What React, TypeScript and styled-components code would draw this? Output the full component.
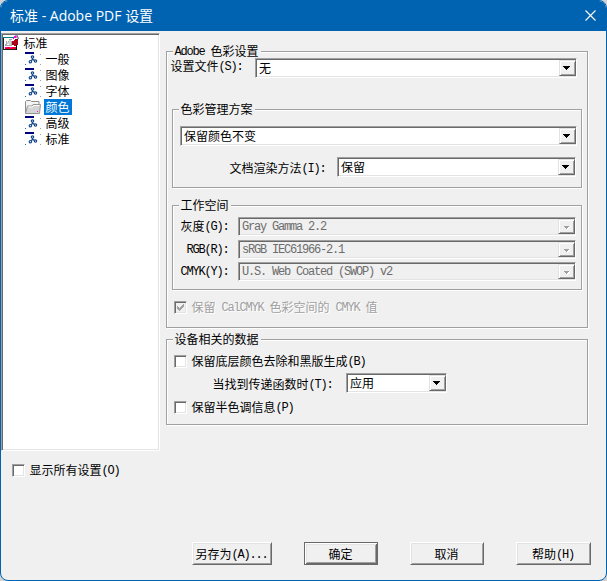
import React from 'react';
import styled, { createGlobalStyle, css } from 'styled-components';

const GlobalStyle = createGlobalStyle`
  * { box-sizing: border-box; }
  body {
    margin: 0;
    background: #cfd3d8;
    color: #000;
    font: 12px/12px "Noto Sans CJK SC", sans-serif;
  }
`;

const sunken = css`
  border: 1px solid;
  border-color: #a0a0a0 #fff #fff #a0a0a0;
  box-shadow: inset 1px 1px #696969, inset -1px -1px #e3e3e3;
`;

const Window = styled.div`
  display: flex;
  flex-direction: column;
  width: 607px;
  height: 581px;
  border: 1px solid #0063b1;
  border-radius: 8px;
  background: #f0f0f0;
  overflow: hidden;
`;

const TitleBar = styled.header`
  display: flex;
  align-items: center;
  justify-content: space-between;
  flex: none;
  height: 30px;
  padding: 0 10px 1px 9px;
  background: #0063b1;
  color: #fff;
  font-size: 14px;
`;

const TitleText = styled.div`
  white-space: pre;
`;

const TitleLatin = styled.span`
  font-family: "Open Sans", sans-serif;
  font-size: 14px;
`;

const Main = styled.div`
  display: flex;
  flex: none;
  height: 511px;
`;

const Side = styled.div`
  display: flex;
  flex-direction: column;
  width: 159px;
  padding-top: 2px;
`;

const Tree = styled.div`
  ${sunken}
  height: 418px;
  flex: none;
  padding: 1px 1px 0 1px;
  background: #fff;
`;

const TreeRow = styled.div<{ $child?: boolean }>`
  display: flex;
  height: 16px;
  padding-left: ${(p) => (p.$child ? 22 : 0)}px;
`;

const TreeIcon = styled.svg`
  flex: none;
  width: 16px;
  height: 16px;
`;

const TreeLabel = styled.span<{ $selected?: boolean }>`
  margin-left: 3px;
  padding: 0 2.5px 0 1.5px;
  line-height: 16px;
  color: ${(p) => (p.$selected ? '#fff' : '#000')};
  background: ${(p) => (p.$selected ? '#0078d7' : 'transparent')};
`;

const Settings = styled.div`
  width: 422px;
  margin-left: 6px;
  padding-top: 20px;
`;

const Group = styled.section<{ $height: number; $top?: number; $nested?: boolean }>`
  display: flow-root;
  height: ${(p) => p.$height}px;
  width: ${(p) => (p.$nested ? '410px' : 'auto')};
  margin: ${(p) => p.$top ?? 0}px 0 0 ${(p) => (p.$nested ? 5 : 0)}px;
  border: 1px solid #a0a0a0;
  box-shadow: inset 1px 1px #fff, 1px 1px #fff;
`;

const Legend = styled.h2`
  width: max-content;
  height: 12px;
  margin: -7px 0 0 6px;
  padding: 0 2.5px 0 1.5px;
  background: #f0f0f0;
  font: inherit;
  white-space: pre;
`;

const Row = styled.div<{ $top: number; $left: number; $gap?: number }>`
  display: flex;
  align-items: flex-start;
  gap: ${(p) => p.$gap ?? 0}px;
  margin: ${(p) => p.$top}px 0 0 ${(p) => p.$left}px;
`;

const Label = styled.label<{ $width: number; $drop?: number }>`
  flex: none;
  width: ${(p) => p.$width}px;
  padding-top: ${(p) => p.$drop ?? 3}px;
  padding-right: 0.5px;
  display: flex;
  justify-content: flex-end;
  white-space: pre;
`;

const ComboBox = styled.div<{ $width: number; $disabled?: boolean }>`
  ${sunken}
  display: flex;
  flex: none;
  width: ${(p) => p.$width}px;
  height: ${(p) => (p.$disabled ? 19 : 20)}px;
  padding: 1px 0 1px 3px;
  background: ${(p) => (p.$disabled ? '#f0f0f0' : '#fff')};
  color: ${(p) => (p.$disabled ? '#6d6d6d' : '#000')};
`;

const ComboValue = styled.span<{ $disabled?: boolean }>`
  flex: 1;
  line-height: ${(p) => (p.$disabled ? 14 : 16)}px;
  white-space: pre;
`;

const raised = css`
  border: 1px solid;
  border-color: #e3e3e3 #696969 #696969 #e3e3e3;
  box-shadow: inset 1px 1px #fff, inset -1px -1px #a0a0a0;
  background: #f0f0f0;
`;

const DropButton = styled.span`
  ${raised}
  width: 17px;
  height: 100%;
`;

const ArrowSvg = styled.svg`
  display: block;
  width: 15px;
  height: 13px;
`;

const CheckRow = styled.label<{ $top: number; $left: number; $disabled?: boolean }>`
  display: flex;
  gap: 4.5px;
  height: 13px;
  margin: ${(p) => p.$top}px 0 0 ${(p) => p.$left}px;
  white-space: pre;
  ${(p) => p.$disabled && css`
    color: #a0a0a0;
    text-shadow: 1px 1px #fff;
  `}
`;

const CheckBox = styled.span<{ $disabled?: boolean }>`
  ${sunken}
  flex: none;
  width: 13px;
  height: 13px;
  background: ${(p) => (p.$disabled ? '#f0f0f0' : '#fff')};
`;

const CheckMark = styled.svg`
  display: block;
  width: 11px;
  height: 11px;
`;

const Footer = styled.footer`
  display: flex;
  gap: 32px;
  padding-left: 191px;
`;

const PushButton = styled.button<{ $width: number; $primary?: boolean }>`
  width: ${(p) => p.$width}px;
  height: 23px;
  padding: 0 1px 1px 0;
  border: 1px solid;
  border-color: #fff #696969 #696969 #fff;
  box-shadow: inset 1px 1px #e3e3e3, inset -1px -1px #a0a0a0;
  background: #f0f0f0;
  color: #000;
  font: inherit;
  line-height: 19px;
  white-space: pre;
  ${(p) => p.$primary && css`
    border-color: #696969;
    box-shadow: inset 1px 1px #fff, inset -1px -1px #696969, inset 2px 2px #e3e3e3, inset -2px -2px #a0a0a0;
  `}
`;

const Narrow = styled.span`
  font-family: "Liberation Mono", monospace;
  font-size: 12px;
  line-height: 1px;
  letter-spacing: -1.2px;
  vertical-align: 1px;
`;

/* Half-width characters take 6px, full-width characters 12px. */
function Mixed({ text }: { text: string }) {
  return (
    <span>
      {text.split(/([\x20-\x7e]+)/).filter(Boolean).map((run, i) =>
        run.charCodeAt(0) < 0x7f ? <Narrow key={i}>{run}</Narrow> : run,
      )}
    </span>
  );
}

function Combo({ value, width, disabled }: { value: string; width: number; disabled?: boolean }) {
  return (
    <ComboBox $width={width} $disabled={disabled}>
      <ComboValue $disabled={disabled}><Mixed text={value} /></ComboValue>
      <DropButton>
        <ArrowSvg viewBox="0 0 15 13" shapeRendering="crispEdges">
          {disabled ? (
            <>
              <path d="M6 7h5v1h-1v1h-1v1h-1v-1h-1v-1h-1z" fill="#fff" />
              <path d="M5 6h5v1h-1v1h-1v1h-1v-1h-1v-1h-1z" fill="#a0a0a0" />
            </>
          ) : (
            <path d="M3 5h7v1h-1v1h-1v1h-1v1h-1v-1h-1v-1h-1v-1h-1z" fill="#000" />
          )}
        </ArrowSvg>
      </DropButton>
    </ComboBox>
  );
}

function Check({ text, top, left, disabled }: { text: string; top: number; left: number; disabled?: boolean }) {
  return (
    <CheckRow $top={top} $left={left} $disabled={disabled}>
      <CheckBox $disabled={disabled}>
        {disabled && (
          <CheckMark viewBox="0 0 11 11" shapeRendering="crispEdges">
            <path d="M2 4h1v1h1v1h1v-1h1v-1h1v-1h1v-1h1v3h-1v1h-1v1h-1v1h-1v1h-1v-1h-1v-1h-1z" fill="#a0a0a0" />
          </CheckMark>
        )}
      </CheckBox>
      <Mixed text={text} />
    </CheckRow>
  );
}

const RootIcon = () => (
  <TreeIcon viewBox="0 0 16 16" shapeRendering="crispEdges">
    <path d="M1 3h12v9H1z" fill="#fff" />
    <path d="M0 2h11v1H0z" fill="#008080" />
    <path d="M0 3h1v12H0zM0 14h14v1H0z" fill="#202020" />
    <path d="M13 10h1v5h-1z" fill="#000" />
    <path d="M9 6h2V5h4v5h-2v1h-2v-1H9z" fill="#b00018" />
    <path d="M12 4h3v1h-3zM10 8h1v2h-1z" fill="#701020" />
    <path d="M2 12h11v2H2z" fill="#f00028" />
    <path d="M2 12h2v1H2zM7 12h2v1H7zM11 1h2v2h-2zM14 1h1v1h-1zM10 3h1v1h-1z" fill="#ff00e0" />
    <path d="M12 0h3v1h-3zM13 1h1v2h-1zM14 2h2v2h-2z" fill="#a99aae" />
    <path d="M3 6h1v3H3zM6 4h3v1H6zM2 9h2v2H2zM4 10h5v1H4zM5 6h1v1H5zM8 6h1v4H8z" fill="#a8a8a8" />
    <path d="M6 5h2v5H6zM4 7h2v2H4z" fill="#d2d2d2" />
  </TreeIcon>
);

const PageIcon = () => (
  <TreeIcon viewBox="0 0 16 16">
    <path d="M0 1h9v2H0z" fill="#000080" />
    <path d="M0 13h1v1H0z" fill="#008080" />
    <path d="M15 3h1v1h-1zM15 13h1v1h-1z" fill="#a0a0a0" />
    <g fill="none" stroke="#174a8c" strokeWidth="1.2">
      <circle cx="7.5" cy="6" r="1.2" />
      <circle cx="5.4" cy="10.7" r="1.2" />
      <circle cx="10.5" cy="10" r="1.2" />
      <path d="M7.5 7v1.6L5.9 9.7M7.6 8.4l2 1" />
    </g>
  </TreeIcon>
);

const FolderIcon = () => (
  <TreeIcon viewBox="0 0 16 16">
    <path d="M.5 14V2.5l1-1h4l1 1h7.5v4" fill="#f4f4f4" stroke="#8c8c8c" />
    <path d="M.5 14.5l2-7.5h4.5l1-1.5h7.5l-1 9z" fill="#d4d4d4" stroke="#969696" />
    <path d="M3.2 8h4.3l1-1.5h6" fill="none" stroke="#fff" />
    <path d="M12 12h1v1h-1z" fill="#ff00ff" />
  </TreeIcon>
);

const pages = ['一般', '图像', '字体', '颜色', '高级', '标准'];

export default function App() {
  return (
    <>
      <GlobalStyle />
      <Window>
        <TitleBar>
          <TitleText>标准<TitleLatin> - Adobe PDF </TitleLatin>设置</TitleText>
          <svg width="11" height="11" viewBox="0 0 11 11">
            <path d="M.5.5l10 10M10.5.5l-10 10" stroke="#fff" fill="none" strokeWidth="1.1" />
          </svg>
        </TitleBar>
        <Main>
          <Side>
            <Tree>
              <TreeRow><RootIcon /><TreeLabel>标准</TreeLabel></TreeRow>
              {pages.map((name) => (
                <TreeRow key={name} $child>
                  {name === '颜色' ? <FolderIcon /> : <PageIcon />}
                  <TreeLabel $selected={name === '颜色'}>{name}</TreeLabel>
                </TreeRow>
              ))}
            </Tree>
            <Check text="显示所有设置(O)" top={13} left={11} />
          </Side>
          <Settings>
            <Group $height={277}>
              <Legend><Mixed text="Adobe 色彩设置" /></Legend>
              <Row $top={1} $left={4} $gap={12}>
                <Label $width={72} $drop={2}><Mixed text="设置文件(S):" /></Label>
                <Combo value="无" width={322} />
              </Row>
              <Group $height={79} $top={31} $nested>
                <Legend>色彩管理方案</Legend>
                <Row $top={11} $left={7}>
                  <Combo value="保留颜色不变" width={397} />
                </Row>
                <Row $top={11} $left={57} $gap={11}>
                  <Label $width={96} $drop={5}><Mixed text="文档渲染方法(I):" /></Label>
                  <Combo value="保留" width={239} />
                </Row>
              </Group>
              <Group $height={85} $top={17} $nested>
                <Legend>工作空间</Legend>
                <Row $top={6} $left={8} $gap={9}>
                  <Label $width={48}><Mixed text="灰度(G):" /></Label>
                  <Combo value="Gray Gamma 2.2" width={338} disabled />
                </Row>
                <Row $top={4} $left={8} $gap={9}>
                  <Label $width={48}><Mixed text="RGB(R):" /></Label>
                  <Combo value="sRGB IEC61966-2.1" width={338} disabled />
                </Row>
                <Row $top={3} $left={8} $gap={9}>
                  <Label $width={48}><Mixed text="CMYK(Y):" /></Label>
                  <Combo value="U.S. Web Coated (SWOP) v2" width={338} disabled />
                </Row>
              </Group>
              <Check text="保留 CalCMYK 色彩空间的 CMYK 值" top={11} left={7} disabled />
            </Group>
            <Group $height={86} $top={11}>
              <Legend>设备相关的数据</Legend>
              <Check text="保留底层颜色去除和黑版生成(B)" top={10} left={7} />
              <Row $top={5} $left={46} $gap={13}>
                <Label $width={120} $drop={5}><Mixed text="当找到传递函数时(T):" /></Label>
                <Combo value="应用" width={101} />
              </Row>
              <Check text="保留半色调信息(P)" top={8} left={7} />
            </Group>
          </Settings>
        </Main>
        <Footer>
          <PushButton $width={80}><Mixed text="另存为(A)..." /></PushButton>
          <PushButton $width={74} $primary>确定</PushButton>
          <PushButton $width={74}>取消</PushButton>
          <PushButton $width={75}><Mixed text="帮助(H)" /></PushButton>
        </Footer>
      </Window>
    </>
  );
}
